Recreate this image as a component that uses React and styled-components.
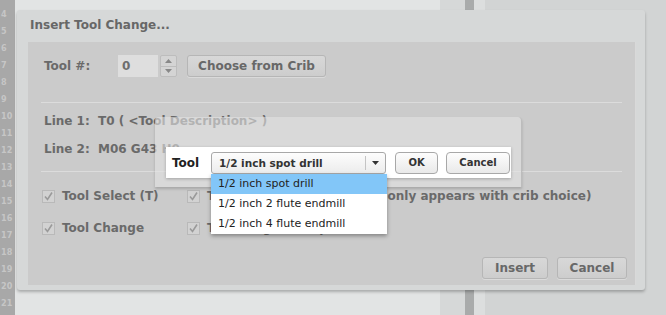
import React from 'react';
import styled, { createGlobalStyle } from 'styled-components';

const Global = createGlobalStyle`
  html, body { margin: 0; padding: 0; }
  body {
    width: 666px;
    height: 315px;
    overflow: hidden;
    font-family: "DejaVu Sans", "Liberation Sans", sans-serif;
  }
`;

const Page = styled.div`
  position: relative;
  display: flex;
  width: 666px;
  height: 315px;
  overflow: hidden;
`;

const Gutter = styled.div`
  width: 15px;
  flex-shrink: 0;
  background: #a8a8a8;
  padding-top: 6px;
  box-sizing: border-box;
`;

const LineNo = styled.div`
  height: 17px;
  line-height: 17px;
  font-family: "DejaVu Sans Condensed", "DejaVu Sans", sans-serif;
  font-size: 9px;
  font-weight: bold;
  color: #c6c6c6;
  padding-left: 1px;
`;

const Editor = styled.div`
  flex: 1;
  padding: 10px 21px 0 2px;
  background: linear-gradient(
    to right,
    #e2e4e4 0,
    #e2e4e4 425px,
    #d6d8d8 425px,
    #d6d8d8 450px,
    #a9abab 450px,
    #a9abab 459px,
    #dcdede 459px,
    #dcdede 470px,
    #d2d4d4 470px
  );
`;

const Dialog = styled.div`
  height: 280px;
  background: #d6d8d8;
  border-radius: 3px;
  box-shadow: 0 2px 3px rgba(0, 0, 0, 0.25);
  padding: 0 9px 5px 11px;
  box-sizing: border-box;
  display: flex;
  flex-direction: column;
`;

const Title = styled.div`
  height: 32px;
  line-height: 31px;
  padding-left: 2px;
  font-size: 12px;
  font-weight: bold;
  color: #676767;
`;

const Panel = styled.div`
  flex: 1;
  background: #cbcbcb;
  border-right: 1px solid #d9d9d9;
  padding: 13px 14px 0 16px;
  display: flex;
  flex-direction: column;
`;

const Row = styled.div`
  display: flex;
  align-items: center;
  height: ${p => p.h ?? 22}px;
  margin-top: ${p => p.mt || 0}px;
  margin-left: ${p => p.ml || 0}px;
`;

const Label = styled.span`
  font-size: 12px;
  font-weight: bold;
  color: #6a6a6a;
  white-space: pre;
  width: ${p => (p.w ? `${p.w}px` : 'auto')};
  flex-shrink: 0;
`;

const NumInput = styled.div`
  width: 40px;
  height: 22px;
  background: #dedede;
  box-sizing: border-box;
  padding-left: 4px;
  line-height: 22px;
  font-size: 12px;
  font-weight: bold;
  color: #6e6e6e;
`;

const Spinner = styled.div`
  width: 17px;
  height: 22px;
  margin-left: 2px;
  display: flex;
  flex-direction: column;
  border: 1px solid #bdbdbd;
  border-radius: 2px;
  box-sizing: border-box;
  background: #d4d4d4;
`;

const SpinHalf = styled.div`
  flex: 1;
  display: flex;
  align-items: center;
  justify-content: center;
  & + & { border-top: 1px solid #bdbdbd; }
`;

const Button = styled.button`
  height: 22px;
  width: ${p => p.w}px;
  margin-left: ${p => p.ml || 0}px;
  border: 1px solid #b6b6b6;
  border-radius: 3px;
  background: linear-gradient(#d8d8d8, #cdcdcd);
  font-family: inherit;
  font-size: 12px;
  font-weight: bold;
  color: #686868;
  padding: 0;
  box-shadow: 0 1px 0 rgba(255, 255, 255, 0.3);
`;

const Rule = styled.div`
  height: 1px;
  margin: ${p => p.mt}px -1px 0 -3px;
  background: #dcdcdc;
`;

const Box = styled.span`
  width: 13px;
  height: 13px;
  box-sizing: border-box;
  border: 1px solid #b9b9b9;
  background: #d2d2d2;
  display: inline-flex;
  align-items: center;
  justify-content: center;
  margin-right: 7px;
  flex-shrink: 0;
`;

const Footer = styled.div`
  display: flex;
  justify-content: flex-end;
  gap: 9px;
  margin: 19px -6px 0 0;
`;

const Popup = styled.div`
  position: absolute;
  left: 155px;
  top: 117px;
  width: 367px;
  height: 70px;
  box-sizing: border-box;
  background: rgba(226, 226, 226, 0.6);
  border-right: 1px solid #bcbcbc;
  border-radius: 4px 4px 0 0;
  box-shadow: 0 2px 3px rgba(0, 0, 0, 0.18);
  padding: 30px 10px 0 11px;
`;

const Bar = styled.div`
  height: 31px;
  background: #fff;
  box-shadow: 0 1px 3px rgba(0, 0, 0, 0.25);
  display: flex;
  align-items: center;
  padding-left: 6px;
`;

const BarLabel = styled.span`
  font-size: 12px;
  font-weight: bold;
  color: #222;
  width: 39px;
`;

const Select = styled.div`
  position: relative;
  width: 175px;
  height: 22px;
  box-sizing: border-box;
  border: 1px solid #a8a8a8;
  border-radius: 3px;
  background: linear-gradient(#fdfdfd, #ececec);
  display: flex;
  align-items: center;
`;

const SelectText = styled.span`
  flex: 1;
  padding-left: 7px;
  font-size: 10.5px;
  font-weight: bold;
  color: #333;
`;

const Arrow = styled.span`
  width: 19px;
  height: 14px;
  border-left: 1px solid #c4c4c4;
  display: flex;
  align-items: center;
  justify-content: center;
`;

const BarButton = styled.button`
  height: 22px;
  width: ${p => p.w}px;
  margin-left: ${p => p.ml}px;
  border: 1px solid #a8a8a8;
  border-radius: 4px;
  background: linear-gradient(#fdfdfd, #e9e9e9);
  font-family: inherit;
  font-size: 10px;
  font-weight: bold;
  color: #333;
  padding: 0;
`;

const List = styled.div`
  position: absolute;
  left: -1px;
  top: 21px;
  width: 176px;
  background: #fff;
  box-shadow: 0 2px 4px rgba(0, 0, 0, 0.35);
`;

const Item = styled.div`
  height: 20px;
  line-height: 20px;
  padding-left: 7px;
  font-size: 11px;
  color: #222;
  white-space: nowrap;
  background: ${p => (p.active ? '#82c6f8' : '#fff')};
`;

const Check = () => (
  <svg width="11" height="11" viewBox="0 0 11 11">
    <path d="M2 5.5 L4.5 8.5 L9 1.5" fill="none" stroke="#9a9a9a" strokeWidth="1.6" />
  </svg>
);

const Tri = ({ up, color = '#888' }) => (
  <svg width="7" height="4" viewBox="0 0 7 4">
    <path d={up ? 'M0 4 L3.5 0 L7 4Z' : 'M0 0 L7 0 L3.5 4Z'} fill={color} />
  </svg>
);

const lines = Array.from({ length: 18 }, (_, i) => i + 4);
const tools = ['1/2 inch spot drill', '1/2 inch 2 flute endmill', '1/2 inch 4 flute endmill'];

export default function App() {
  return (
    <>
      <Global />
      <Page>
        <Gutter>
          {lines.map(n => (
            <LineNo key={n}>{n}</LineNo>
          ))}
        </Gutter>
        <Editor>
          <Dialog>
            <Title>Insert Tool Change...</Title>
            <Panel>
              <Row>
                <Label w={74}>Tool #:</Label>
                <NumInput>0</NumInput>
                <Spinner>
                  <SpinHalf><Tri up /></SpinHalf>
                  <SpinHalf><Tri /></SpinHalf>
                </Spinner>
                <Button w={139} ml={10}>Choose from Crib</Button>
              </Row>
              <Rule mt={25} />
              <Row h={20} mt={8}>
                <Label w={54}>Line 1:</Label>
                <Label>T0 ( &lt;Tool Description&gt; )</Label>
              </Row>
              <Row h={20} mt={8}>
                <Label w={54}>Line 2:</Label>
                <Label>M06 G43 H0</Label>
              </Row>
              <Rule mt={12} />
              <Row h={20} mt={14} ml={-2}>
                <Box><Check /></Box>
                <Label w={125}>Tool Select (T)</Label>
                <Box><Check /></Box>
                <Label w={175}>Tool Offset (H)</Label>
                <Label>(only appears with crib choice)</Label>
              </Row>
              <Row h={20} mt={12} ml={-2}>
                <Box><Check /></Box>
                <Label w={125}>Tool Change</Label>
                <Box><Check /></Box>
                <Label>Tool Length Comp</Label>
              </Row>
              <Footer>
                <Button w={66}>Insert</Button>
                <Button w={70}>Cancel</Button>
              </Footer>
            </Panel>
          </Dialog>
        </Editor>
        <Popup>
          <Bar>
            <BarLabel>Tool</BarLabel>
            <Select>
              <SelectText>1/2 inch spot drill</SelectText>
              <Arrow><Tri color="#333" /></Arrow>
              <List>
                {tools.map((t, i) => (
                  <Item key={t} active={i === 0}>{t}</Item>
                ))}
              </List>
            </Select>
            <BarButton w={43} ml={9}>OK</BarButton>
            <BarButton w={64} ml={8}>Cancel</BarButton>
          </Bar>
        </Popup>
      </Page>
    </>
  );
}
